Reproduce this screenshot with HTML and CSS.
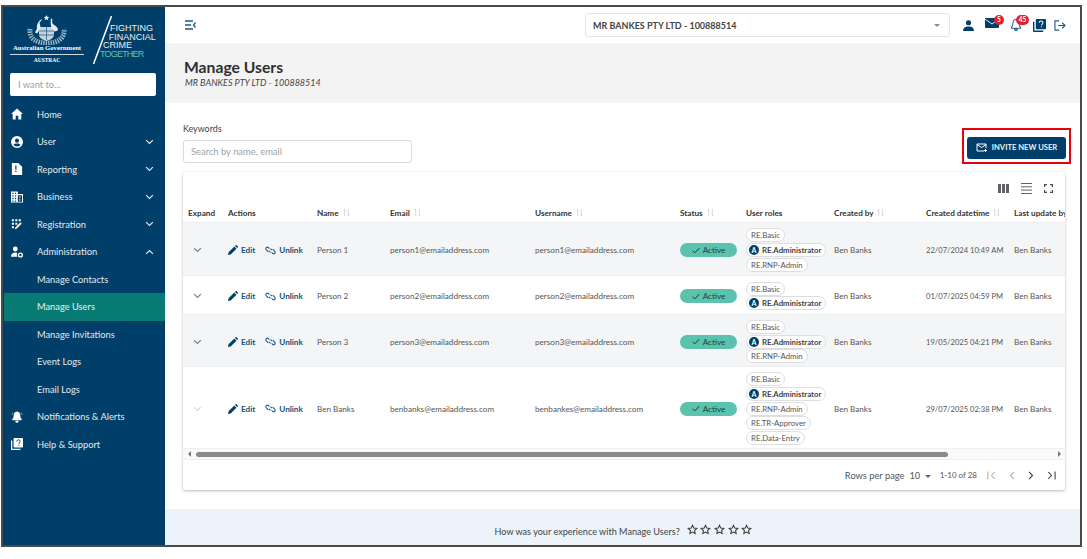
FILE: index.html
```html
<!DOCTYPE html>
<html lang="en">
<head>
<meta charset="utf-8">
<title>Manage Users</title>
<link rel="stylesheet" href="styles.css">
</head>
<body>
<svg class="defs" width="0" height="0" aria-hidden="true">
  <symbol id="chev" viewBox="0 0 12 8"><path d="M1.5 1.5 6 6l4.5-4.5" fill="none" stroke="currentColor" stroke-width="1.6"/></symbol>
  <symbol id="pencil" viewBox="0 0 12 12"><path d="M0 12l.7-3.2L7.6 1.900l2.500 2.500L3.200 11.300zM8.400 1.100 9.300.2c.3-.3.7-.3 1 0l1.500 1.500c.3.3.3.7 0 1l-.9.9z" fill="currentColor"/></symbol>
  <symbol id="unlink" viewBox="0 0 14 12"><g fill="none" stroke="currentColor" stroke-width="1.400"><path d="M5.500 3.500 4 2A2 2 0 0 0 1.200 4.800l2.800 3M8.500 8.500 10 10a2 2 0 0 0 2.800-2.800L10 4.200M5 6.500l2 2M7 3.500l2 2"/></g></symbol>
  <symbol id="sort" viewBox="0 0 8 10"><path d="M2 1v8M1 3l1-2M6 9V1M6 9l1-2" fill="none" stroke="#c9ced3" stroke-width=".9"/></symbol>
  <symbol id="star" viewBox="0 0 24 24"><path d="M12 2.800l2.800 6.200 6.700.7-5 4.500 1.400 6.600L12 17.400l-5.900 3.400 1.400-6.600-5-4.500 6.700-.7z" fill="none" stroke="currentColor" stroke-width="2.200"/></symbol>
  <symbol id="check" viewBox="0 0 12 10"><path d="M1 5.500 4.200 8.500 11 1.500" fill="none" stroke="currentColor" stroke-width="1.500"/></symbol>
</svg>
<div class="frame">
  <aside class="sidebar">
    <div class="brand">
      <div class="crest">
        <svg class="crest-art" width="40" height="30" viewBox="0 0 40 30" aria-hidden="true">
          <path d="M3 14C2 24 10 28 20 28s18-4 17-14" fill="none" stroke="#cfdbe4" stroke-width="5" stroke-dasharray="1.400 1" opacity=".75"/>
          <g fill="#e6edf2">
            <path d="M19.500 0l.8 1.800 2 .2-1.500 1.300.4 2-1.700-1-1.700 1 .4-2L16.700 2l2-.2z"/>
            <path d="M15 4c-.5 2-1.500 2.500-2.500 3.500 1 3 1 5 .5 7l-3 4-2-1 2-4c-.5-3 .5-7 5-9.500z"/>
            <path d="M24 3.500c1.200 0 1.700 1 1.200 2-.5 2 .5 4 3.500 5.500 2 1.500 2.500 3 2 4.500l-3 1-3-3c-1-2.500-1.500-6.500-.7-10z"/>
            <path d="M12 12h15v8c0 3-4 5-7.500 6C16 25 12 23 12 20z" opacity=".85"/>
          </g>
          <g stroke="#003f69" stroke-width=".6"><path d="M19.500 12v13M12 16h15M12 20h15"/></g>
        </svg>
        <div class="gov">Australian Government</div>
        <div class="austrac">AUSTRAC</div>
      </div>
      <svg class="slash" width="19" height="48" viewBox="0 0 19 48" aria-hidden="true"><path d="M18.500 0 .5 48" stroke="#fff" stroke-width="1.500"/></svg>
      <div class="tag"><span class="t1">FIGHTING</span><span class="t2">FINANCIAL</span><span class="t3">CRIME</span><span class="tog">TOGETHER</span></div>
    </div>
    <div class="want">I want to...</div>
    <nav class="nav">
      <a class="item"><svg class="ico" viewBox="0 0 14 13"><path d="M7 0 0 6.500h2V13h3.500V8.500h3V13H12V6.500h2z" fill="currentColor"/></svg><span>Home</span></a>
      <a class="item"><svg class="ico" viewBox="0 0 14 14"><path fill-rule="evenodd" d="M7 0a7 7 0 1 0 0 14A7 7 0 0 0 7 0zm0 3a2.400 2.400 0 1 1 0 4.800A2.400 2.400 0 0 1 7 3zm0 9.300c-1.800 0-3.300-.8-4.200-2 .9-1.100 2.700-1.600 4.200-1.600s3.300.5 4.200 1.600c-.9 1.200-2.400 2-4.200 2z" fill="currentColor"/></svg><span>User</span><svg class="arrow"><use href="#chev"/></svg></a>
      <a class="item"><svg class="ico" viewBox="0 0 12 14"><path fill-rule="evenodd" d="M1 0h6.500L12 4.500V13a1 1 0 0 1-1 1H1a1 1 0 0 1-1-1V1a1 1 0 0 1 1-1zm3 3v5h1.400V3zm0 6v1.500h1.400V9z" fill="currentColor"/></svg><span>Reporting</span><svg class="arrow"><use href="#chev"/></svg></a>
      <a class="item"><svg class="ico" viewBox="0 0 14 13"><path fill-rule="evenodd" d="M0 0h8v3h6v10H0zm1.500 1.500V3H3V1.500zm3 0V3H6V1.500zm-3 3V6H3V4.500zm3 0V6H6V4.500zm-3 3V9H3V7.500zm3 0V9H6V7.500zm-3 3V12H3v-1.500zm3 0V12H6v-1.500zM8 4.500V12h4.800V4.500zM9.500 6H11v1.500H9.500zm0 3H11v1.500H9.500z" fill="currentColor"/></svg><span>Business</span><svg class="arrow"><use href="#chev"/></svg></a>
      <a class="item"><svg class="ico" viewBox="0 0 14 13"><path d="M1 1h2.400v2.400H1zm4 0h2.400v2.400H5zm4 0h2.400v2.400H9zM1 5h2.400v2.400H1zm4 0h2.400v2.400H5zM1 9h2.400v2.400H1zm4 1.600 6-6 1.500 1.500-6 6-2 .5z" fill="currentColor"/></svg><span>Registration</span><svg class="arrow"><use href="#chev"/></svg></a>
      <a class="item"><svg class="ico" viewBox="0 0 14 13"><circle cx="5" cy="3" r="2.800" fill="currentColor"/><path d="M0 12c0-3 2-5 5-5 1 0 1.800.2 2.500.6A4 4 0 0 0 7.500 12z" fill="currentColor"/><circle cx="11" cy="10" r="2.200" fill="none" stroke="currentColor" stroke-width="1.600"/></svg><span>Administration</span><svg class="arrow up"><use href="#chev"/></svg></a>
      <a class="item sub"><span>Manage Contacts</span></a>
      <a class="item sub active"><span>Manage Users</span></a>
      <a class="item sub"><span>Manage Invitations</span></a>
      <a class="item sub"><span>Event Logs</span></a>
      <a class="item sub"><span>Email Logs</span></a>
      <a class="item"><svg class="ico" viewBox="0 0 14 14"><path d="M7 1c2.400 0 3.600 1.800 3.600 4 0 2.500 1 3.800 1.800 4.800v.7H1.600v-.7C2.400 8.800 3.400 7.500 3.400 5 3.400 2.800 4.600 1 7 1zM5.500 11.500h3A1.500 1.500 0 0 1 7 13.500a1.500 1.500 0 0 1-1.500-2zM2.400 1.500.8 4.500M11.600 1.500l1.600 3" fill="currentColor" stroke="currentColor" stroke-width=".5"/></svg><span>Notifications &amp; Alerts</span></a>
      <a class="item"><svg class="ico" viewBox="0 0 14 14" aria-hidden="true"><path d="M4 0h9a1 1 0 0 1 1 1v9a1 1 0 0 1-1 1H4a1 1 0 0 1-1-1V1a1 1 0 0 1 1-1z" fill="currentColor"/><path d="M0 3h1.500v9.500H11V14H1a1 1 0 0 1-1-1z" fill="currentColor"/><path d="M6.700 4c0-2.400 4-2.400 4 0 0 1.400-1.500 1.400-1.500 2.800M9.200 7.800v1.200" fill="none" stroke="#003f69" stroke-width="1.100"/></svg><span>Help &amp; Support</span></a>
    </nav>
  </aside>
  <div class="main">
    <header class="topbar">
      <svg class="collapse" width="11" height="10" viewBox="0 0 11 10" aria-hidden="true"><path d="M0 1h8M0 5h6M0 9h8M10.500 2.500 8.500 5l2 2.500" fill="none" stroke="#1d5a86" stroke-width="1.300"/></svg>
      <div class="org"><span>MR BANKES PTY LTD - 100888514</span><i class="caret"></i></div>
      <div class="tools">
        <svg class="tool" width="11" height="11" viewBox="0 0 12 12"><circle cx="6" cy="3" r="2.800" fill="#003f69"/><path d="M0 12c0-3.500 2.500-5 6-5s6 1.500 6 5z" fill="#003f69"/></svg>
        <span class="tool-wrap"><svg width="14" height="11" viewBox="0 0 14 11"><path d="M0 0h14v9a1 1 0 0 1-1 1H1a1 1 0 0 1-1-1z" fill="#003f69"/><path d="M0 1l7 5 7-5" fill="none" stroke="#fff" stroke-width=".9"/></svg><b class="badge one">5</b></span>
        <span class="tool-wrap"><svg width="12" height="14" viewBox="0 0 13 14"><path d="M6.500 1c2.300 0 3.300 1.700 3.300 4 0 2.500.9 3.700 1.700 4.800v.7h-10v-.7C2.300 8.700 3.200 7.500 3.200 5c0-2.300 1-4 3.300-4zM5 11.500h3a1.500 1.500 0 0 1-3 0z" fill="none" stroke="#2a6186" stroke-width="1.100"/></svg><b class="badge two">45</b></span>
        <svg class="tool" width="13" height="13" viewBox="0 0 14 14" aria-hidden="true"><path d="M4 0h9a1 1 0 0 1 1 1v9a1 1 0 0 1-1 1H4a1 1 0 0 1-1-1V1a1 1 0 0 1 1-1z" fill="#003f69"/><path d="M0 3h1.500v9.500H11V14H1a1 1 0 0 1-1-1z" fill="#003f69"/><path d="M6.700 4c0-2.400 4-2.400 4 0 0 1.400-1.500 1.400-1.500 2.800M9.200 7.800v1.200" fill="none" stroke="#fff" stroke-width="1.100"/></svg>
        <svg class="tool exit" width="12" height="11" viewBox="0 0 13 12"><path d="M5.500 1H1v10h4.500M4.500 6H12M9 3l3 3-3 3" fill="none" stroke="#1d5a86" stroke-width="1.200"/></svg>
      </div>
    </header>
    <section class="title">
      <h1>Manage Users</h1>
      <p>MR BANKES PTY LTD - 100888514</p>
    </section>
    <section class="content">
      <div class="search-row">
        <div class="search">
          <label>Keywords</label>
          <div class="input">Search by name, email</div>
        </div>
        <div class="invite-outline">
          <button class="invite"><svg width="11" height="10" viewBox="0 0 11 10"><path d="M8 8H1V1h9v4M1 1.500l4.500 3 4.500-3M8 7.500h3M9.500 6v3" fill="none" stroke="#fff" stroke-width="1"/></svg>INVITE NEW USER</button>
        </div>
      </div>
      <div class="card">
        <div class="table-tools">
          <svg width="11" height="9" viewBox="0 0 11 9"><path d="M0 0h3v9H0zM4 0h3v9H4zM8 0h3v9H8z" fill="#5f6368"/></svg>
          <svg width="11" height="11" viewBox="0 0 11 11"><path d="M0 .5h11M0 3.800h11M0 7.100h11M0 10.500h11" stroke="#5f6368" stroke-width="1"/></svg>
          <svg width="9" height="9" viewBox="0 0 9 9"><path d="M.6 3V.6H3M6 .6h2.400V3M8.400 6v2.400H6M3 8.400H.6V6" fill="none" stroke="#4a4e52" stroke-width="1.200"/></svg>
        </div>
        <div class="table">
          <div class="row head">
            <div class="c-expand">Expand</div><div class="c-actions">Actions</div>
            <div class="c-name">Name <svg class="sort"><use href="#sort"/></svg></div>
            <div class="c-email">Email <svg class="sort"><use href="#sort"/></svg></div>
            <div class="c-user">Username <svg class="sort"><use href="#sort"/></svg></div>
            <div class="c-status">Status <svg class="sort"><use href="#sort"/></svg></div>
            <div class="c-roles">User roles</div>
            <div class="c-by">Created by <svg class="sort"><use href="#sort"/></svg></div>
            <div class="c-date">Created datetime <svg class="sort"><use href="#sort"/></svg></div>
            <div class="c-last">Last update by</div>
          </div>
          <div class="row shade h1">
            <div class="c-expand"><svg class="exp"><use href="#chev"/></svg></div>
            <div class="c-actions"><a class="act edit"><svg class="pen"><use href="#pencil"/></svg>Edit</a><a class="act"><svg class="unl"><use href="#unlink"/></svg>Unlink</a></div>
            <div class="c-name">Person 1</div><div class="c-email">person1@emailaddress.com</div><div class="c-user">person1@emailaddress.com</div>
            <div class="c-status"><span class="status"><svg class="chk"><use href="#check"/></svg>Active</span></div>
            <div class="c-roles"><span class="role">RE.Basic</span><span class="role admin"><i>A</i>RE.Administrator</span><span class="role">RE.RNP-Admin</span></div>
            <div class="c-by">Ben Banks</div><div class="c-date c-dateval">22/07/2024 10:49 AM</div><div class="c-last">Ben Banks</div>
          </div>
          <div class="row h2">
            <div class="c-expand"><svg class="exp"><use href="#chev"/></svg></div>
            <div class="c-actions"><a class="act edit"><svg class="pen"><use href="#pencil"/></svg>Edit</a><a class="act"><svg class="unl"><use href="#unlink"/></svg>Unlink</a></div>
            <div class="c-name">Person 2</div><div class="c-email">person2@emailaddress.com</div><div class="c-user">person2@emailaddress.com</div>
            <div class="c-status"><span class="status"><svg class="chk"><use href="#check"/></svg>Active</span></div>
            <div class="c-roles"><span class="role">RE.Basic</span><span class="role admin"><i>A</i>RE.Administrator</span></div>
            <div class="c-by">Ben Banks</div><div class="c-date c-dateval">01/07/2025 04:59 PM</div><div class="c-last">Ben Banks</div>
          </div>
          <div class="row shade h4">
            <div class="c-expand"><svg class="exp"><use href="#chev"/></svg></div>
            <div class="c-actions"><a class="act edit"><svg class="pen"><use href="#pencil"/></svg>Edit</a><a class="act"><svg class="unl"><use href="#unlink"/></svg>Unlink</a></div>
            <div class="c-name">Person 3</div><div class="c-email">person3@emailaddress.com</div><div class="c-user">person3@emailaddress.com</div>
            <div class="c-status"><span class="status"><svg class="chk"><use href="#check"/></svg>Active</span></div>
            <div class="c-roles"><span class="role">RE.Basic</span><span class="role admin"><i>A</i>RE.Administrator</span><span class="role">RE.RNP-Admin</span></div>
            <div class="c-by">Ben Banks</div><div class="c-date c-dateval">19/05/2025 04:21 PM</div><div class="c-last">Ben Banks</div>
          </div>
          <div class="row h3">
            <div class="c-expand"><svg class="exp faint"><use href="#chev"/></svg></div>
            <div class="c-actions"><a class="act edit"><svg class="pen"><use href="#pencil"/></svg>Edit</a><a class="act"><svg class="unl"><use href="#unlink"/></svg>Unlink</a></div>
            <div class="c-name">Ben Banks</div><div class="c-email">benbanks@emailaddress.com</div><div class="c-user">benbankes@emailaddress.com</div>
            <div class="c-status"><span class="status"><svg class="chk"><use href="#check"/></svg>Active</span></div>
            <div class="c-roles"><span class="role">RE.Basic</span><span class="role admin"><i>A</i>RE.Administrator</span><span class="role">RE.RNP-Admin</span><span class="role">RE.TR-Approver</span><span class="role">RE.Data-Entry</span></div>
            <div class="c-by">Ben Banks</div><div class="c-date c-dateval">29/07/2025 02:38 PM</div><div class="c-last">Ben Banks</div>
          </div>
        </div>
        <div class="scrollbar"><i class="tri left"></i><div class="track"><div class="thumb"></div></div><i class="tri right"></i></div>
        <div class="pager">
          <span class="rpp">Rows per page</span>
          <span class="rpp-val">10 <i class="caret small"></i></span>
          <span class="range">1-10 of 28</span>
          <div class="pager-btns">
            <svg width="9" height="9" viewBox="0 0 10 9"><path d="M1 0v9M8.500 .8 5 4.500l3.500 3.700" fill="none" stroke="#b0b4b8" stroke-width="1.200"/></svg>
            <svg width="6" height="9" viewBox="0 0 6 9"><path d="M5 .8 1.500 4.500 5 8.200" fill="none" stroke="#b0b4b8" stroke-width="1.200"/></svg>
            <svg width="6" height="9" viewBox="0 0 6 9"><path d="M1 .8 4.500 4.500 1 8.200" fill="none" stroke="#444" stroke-width="1.200"/></svg>
            <svg width="9" height="9" viewBox="0 0 10 9"><path d="M9 0v9M1.500 .8 5 4.500 1.500 8.200" fill="none" stroke="#444" stroke-width="1.200"/></svg>
          </div>
        </div>
      </div>
    </section>
    <footer class="feedback">
      <span>How was your experience with Manage Users?</span>
      <span class="stars"><svg><use href="#star"/></svg><svg><use href="#star"/></svg><svg><use href="#star"/></svg><svg><use href="#star"/></svg><svg><use href="#star"/></svg></span>
    </footer>
  </div>
</div>
</body>
</html>
```

FILE: styles.css
```css
* { box-sizing: border-box; }
html, body { height: 100%; }
body {
  margin: 0;
  background: #fff;
  font-family: Lato, "Open Sans", "Liberation Sans", sans-serif;
  color: #444;
  overflow: hidden;
}
.defs { display: block; height: 0; }
.frame {
  display: flex;
  width: 1081px;
  height: 542px;
  margin: 5px 0 0 1px;
  border: 2px solid #4a4a4a;
  overflow: hidden;
}
.sidebar {
  width: 162px;
  flex: none;
  background: #003f69;
  color: #e8eef2;
  display: flex;
  flex-direction: column;
}
.brand { display: flex; height: 59px; padding: 8px 0 0 7px; flex: none; }
.crest { width: 74px; flex: none; text-align: center; color: #fff; }
.crest-art { display: block; margin: 0 auto -2px; }
.gov {
  font: 700 6.700px/9px "Liberation Serif", serif;
  border-bottom: 1px solid #cfdbe4;
  padding-bottom: 2px;
  white-space: nowrap;
}
.austrac { font: 700 5.500px/11px "Liberation Serif", serif; }
.slash { margin: 1px 0 0 9px; flex: none; }
.tag {
  display: flex;
  flex-direction: column;
  margin: 9px 0 0 -12px;
  font: 400 9px/8.700px "Liberation Sans", sans-serif;
  color: #e9eef2;
  white-space: nowrap;
}
.t1 { padding-left: 10px; }
.t2 { padding-left: 8.700px; }
.t3 { padding-left: 3px; }
.tog { color: #5fc4b4; letter-spacing: -.8px; }
.want {
  margin: 7px 9px 0 7px;
  height: 23px;
  flex: none;
  background: #fff;
  border-radius: 2px;
  padding: 0 8px;
  font-size: 9.300px;
  line-height: 23px;
  color: #9aa0a6;
}
.nav { display: flex; flex-direction: column; margin-top: 4.500px; }
.item {
  display: flex;
  align-items: center;
  height: 27.500px;
  padding-left: 8px;
  padding-right: 11px;
  font-size: 9.300px;
  color: #e3eaef;
  flex: none;
}
.item span { flex: 1; }
.ico { width: 12px; height: 12px; color: #fff; margin-right: 14px; flex: none; }
.arrow { width: 9px; height: 6px; color: #e3eaef; }
.arrow.up { transform: rotate(180deg); }
.sub { padding-left: 34px; }
.active { background: #087a74; margin-left: 1px; padding-left: 33px; color: #e4f3f0; }
.main { flex: 1; min-width: 0; display: flex; flex-direction: column; background: #fff; }
.topbar {
  display: flex;
  align-items: center;
  height: 36px;
  padding: 0 0 0 20px;
  flex: none;
}
.collapse { flex: none; }
.org {
  margin-left: 389px;
  width: 365px;
  flex: none;
  height: 24px;
  border: 1px solid #e4e6e8;
  border-radius: 3px;
  display: flex;
  align-items: center;
  justify-content: space-between;
  padding: 0 9px 0 7px;
  font-size: 9px;
  font-weight: 700;
  color: #444;
}
.caret { width: 0; height: 0; border: 3px solid transparent; border-top: 3.500px solid #8a8d90; border-bottom: 0; }
.caret.small { display: inline-block; border-top-color: #666; vertical-align: middle; margin-left: 2px; }
.tools { display: flex; align-items: center; gap: 11px; margin-left: 13px; flex: none; }
.tool { flex: none; display: block; }
.exit { margin-left: -3px; }
.tool-wrap { position: relative; display: block; height: 14px; line-height: 0; }
.badge {
  position: absolute;
  top: -3px;
  background: #e0202a;
  color: #fff;
  border-radius: 6px;
  font: 700 6.500px/10px Lato, sans-serif;
  height: 10px;
  min-width: 10px;
  text-align: center;
}
.badge.one { left: 9px; }
.badge.two { left: 6px; width: 13px; }
.title {
  background: #f3f3f3;
  height: 60px;
  padding: 14px 18px 0 19px;
  flex: none;
}
.title h1 { margin: 0; font-size: 15.700px; line-height: 20px; font-weight: 700; color: #2f2f2f; }
.title p { margin: 0 0 0 1px; font-size: 9px; line-height: 12px; font-style: italic; color: #444; }
.content { flex: 1; min-height: 0; padding: 0 0 0 18px; }
.search-row { display: flex; align-items: flex-start; height: 69px; padding-top: 20px; }
.search { flex: none; }
.search label { display: block; font-size: 8.900px; line-height: 12px; color: #444; margin-bottom: 5px; }
.input {
  width: 229px;
  height: 23px;
  border: 1px solid #d8dadc;
  border-radius: 3px;
  padding: 0 7px;
  font-size: 9.400px;
  line-height: 21px;
  color: #a0a4a8;
}
.invite-outline {
  margin: 5px 0 0 550px;
  border: 2px solid #e8000d;
  padding: 7px 3px 3px;
  height: 36px;
  width: 109px;
  flex: none;
}
.invite {
  width: 100%;
  height: 100%;
  border: 0;
  border-radius: 3px;
  background: #003f69;
  color: #eef3f6;
  font: 700 7.600px/1 Lato, sans-serif;
  display: flex;
  align-items: center;
  justify-content: center;
  gap: 5px;
  padding: 0;
  white-space: nowrap;
}
.card {
  width: 882px;
  background: #fff;
  border-radius: 2px;
  box-shadow: 0 1px 3px rgba(0,0,0,.28);
  display: flex;
  flex-direction: column;
}
.table-tools { height: 32px; display: flex; justify-content: flex-end; align-items: center; gap: 12px; padding-right: 12px; }
.table { overflow: hidden; font-size: 8.150px; color: #555; }
.row { display: flex; align-items: center; border-bottom: 1px solid #eceeef; width: 1000px; padding-top: 2px; }
.row > div { flex: none; white-space: nowrap; }
.head { height: 19px; padding-top: 0; font-weight: 700; color: #333; font-size: 8.200px; }
.shade { background: #f4f5f7; }
.h1 { height: 53px; }
.h2 { height: 39px; }
.h4 { height: 52px; }
.h3 { height: 82px; }
.c-expand { width: 45px; padding-left: 5px; }
.c-actions { width: 89px; display: flex; align-items: center; }
.c-name { width: 73px; }
.c-email { width: 145px; }
.c-user { width: 145px; }
.c-status { width: 66px; }
.c-roles { width: 88px; display: flex; flex-direction: column; align-items: flex-start; gap: .7px; }
.c-by { width: 92px; }
.c-date { width: 88px; }
.c-dateval { font-size: 7.600px; }
.c-last { width: 80px; }
.sort { width: 7px; height: 9px; vertical-align: -1px; margin-left: 2px; }
.exp { width: 9px; height: 6px; color: #7a7f84; margin-left: 5px; display: block; }
.exp.faint { color: #d8dadc; }
.act { display: inline-flex; align-items: center; font-weight: 700; color: #15507a; }
.edit { margin-right: 10px; }
.pen { width: 10px; height: 10px; margin-right: 3px; color: #003f69; }
.unl { width: 11px; height: 9px; margin-right: 3px; color: #1d5a86; }
.status {
  width: 57px;
  height: 14px;
  border-radius: 7px;
  background: #5bc2ad;
  color: #21413b;
  display: flex;
  align-items: center;
  justify-content: center;
  gap: 3px;
}
.chk { width: 8px; height: 7px; color: #23302e; }
.role {
  height: 14px;
  border: 1px solid #dcdee0;
  border-radius: 7px;
  background: #fff;
  padding: 0 4px;
  font-size: 7.800px;
  line-height: 12px;
  color: #555;
  white-space: nowrap;
}
.admin { display: inline-flex; align-items: center; padding-left: 2px; font-weight: 700; color: #444; }
.admin i {
  width: 10px;
  height: 10px;
  border-radius: 50%;
  background: #003f69;
  color: #fff;
  font: 700 7px/10px Lato, sans-serif;
  text-align: center;
  margin-right: 3px;
}
.scrollbar { height: 10px; display: flex; align-items: center; padding: 0 4px 0 5px; background: #fafafa; gap: 5px; }
.tri { width: 0; height: 0; border: 3px solid transparent; flex: none; }
.tri.left { border-right: 3px solid #777; border-left: 0; }
.tri.right { border-left: 3px solid #777; border-right: 0; }
.track { flex: 1; }
.thumb { width: 752px; height: 5px; border-radius: 3px; background: #8b8b8b; }
.pager {
  height: 31px;
  flex: none;
  display: flex;
  align-items: center;
  justify-content: flex-end;
  font-size: 9.300px;
  color: #555;
  padding-right: 9px;
  border-top: 1px solid #eceeef;
}
.rpp-val { margin-left: 5px; }
.range { margin-left: 9px; font-size: 8px; }
.pager-btns { display: flex; align-items: center; gap: 13px; margin-left: 10px; }
.feedback {
  background: #ecf3fa;
  height: 36px;
  flex: none;
  display: flex;
  align-items: center;
  justify-content: center;
  gap: 7px;
  font-size: 9.100px;
  color: #444;
  padding: 8px 0 0 2px;
}
.stars { display: flex; gap: 2.700px; color: #3a3a3a; margin-top: -4px; }
.stars svg { width: 11px; height: 11px; }
```
